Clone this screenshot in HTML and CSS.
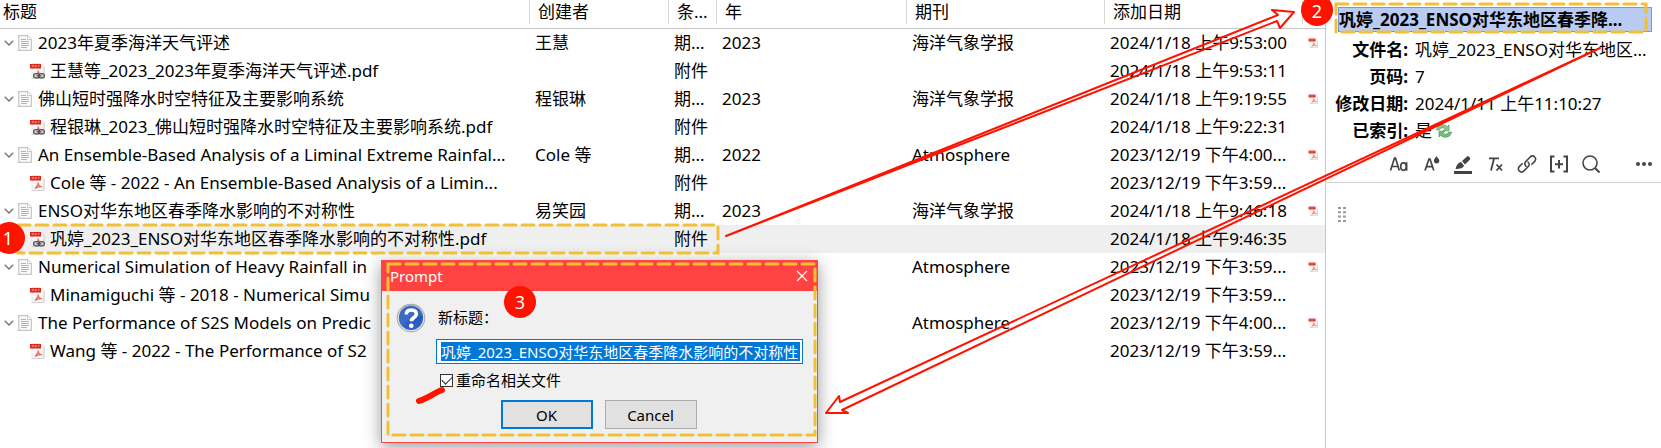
FILE: index.html
```
<!DOCTYPE html>
<html lang="zh-CN">
<head>
<meta charset="utf-8">
<title>Zotero</title>
<link rel="stylesheet" href="styles.css">
</head>
<body>
<svg class="defs" aria-hidden="true">
  <symbol id="doc" viewBox="0 0 14 16">
    <path d="M.7.7H9.6L13.3 4.4V15.3H.7Z" fill="#f9f9f9" stroke="#c6c6c6" stroke-width="1.2"/>
    <path d="M9.5.8V4.5H13.2" fill="#fff" stroke="#c9c9c9"/>
    <path d="M3 4.5H8M3 6.5H11M3 8.5H11M3 10.5H11M3 12.5H9" stroke="#b4b4b4"/>
  </symbol>
  <symbol id="pdf" viewBox="0 0 16 16">
    <path d="M3 .5H11.5L15 4V15.5H3Z" fill="#f7f7f7" stroke="#e6e6e6"/>
    <path d="M15 4V15.5H3" fill="none" stroke="#d2d2d2"/>
    <path d="M1 1H12V5.500H1Z" fill="#dd2113"/>
    <path d="M3 4V2.300H4.500V3.300H3M6 2.300V4H7L7.700 3.200 7 2.300ZM9.200 4V2.300H10.700M9.200 3.200H10.300" fill="none" stroke="#f6b5ae" stroke-width=".6"/>
    <path d="M6 13.500C8 12 9.300 9.500 9.200 7.500 9.300 10 11 11.700 13.200 11.800 10.500 11.200 8 12 6 13.500Z" fill="none" stroke="#ef6a5c" stroke-width="1.200"/>
  </symbol>
  <symbol id="pdflink" viewBox="0 0 16 16">
    <use href="#pdf" width="16" height="16"/>
    <rect x="4" y="10" width="12" height="5.500" rx="2.700" fill="#d6d6d6"/>
    <rect x="4.600" y="10.600" width="6" height="4.300" rx="2.100" fill="none" stroke="#555" stroke-width="1.300"/>
    <rect x="9.400" y="10.600" width="6" height="4.300" rx="2.100" fill="none" stroke="#555" stroke-width="1.300"/>
    <path d="M7.500 12.700H12.500" stroke="#555" stroke-width="1.200"/>
  </symbol>
  <symbol id="chev" viewBox="0 0 10 6">
    <path d="M.8.8 5 5 9.200.8" fill="none" stroke="#6f6f6f" stroke-width="1.300"/>
  </symbol>
</svg>

<div class="app">
  <main class="library">
    <table class="items">
      <colgroup><col><col class="c-creator"><col class="c-type"><col class="c-year"><col class="c-journal"><col class="c-date"><col class="c-att"></colgroup>
      <thead>
        <tr><th><div>标题</div></th><th><div>创建者</div></th><th><div>条...</div></th><th><div>年</div></th><th><div>期刊</div></th><th><div>添加日期</div></th><th><div></div></th></tr>
      </thead>
      <tbody>
        <tr><td><div class="name"><svg class="chev"><use href="#chev"/></svg><svg class="doc"><use href="#doc"/></svg><span>2023年夏季海洋天气评述</span></div></td><td>王慧</td><td>期...</td><td>2023</td><td>海洋气象学报</td><td>2024/1/18 上午9:53:00</td><td><svg class="att"><use href="#pdf"/></svg></td></tr>
        <tr><td><div class="name child"><svg class="pdf"><use href="#pdflink"/></svg><span>王慧等_2023_2023年夏季海洋天气评述.pdf</span></div></td><td></td><td>附件</td><td></td><td></td><td>2024/1/18 上午9:53:11</td><td></td></tr>
        <tr><td><div class="name"><svg class="chev"><use href="#chev"/></svg><svg class="doc"><use href="#doc"/></svg><span>佛山短时强降水时空特征及主要影响系统</span></div></td><td>程银琳</td><td>期...</td><td>2023</td><td>海洋气象学报</td><td>2024/1/18 上午9:19:55</td><td><svg class="att"><use href="#pdf"/></svg></td></tr>
        <tr><td><div class="name child"><svg class="pdf"><use href="#pdflink"/></svg><span>程银琳_2023_佛山短时强降水时空特征及主要影响系统.pdf</span></div></td><td></td><td>附件</td><td></td><td></td><td>2024/1/18 上午9:22:31</td><td></td></tr>
        <tr><td><div class="name"><svg class="chev"><use href="#chev"/></svg><svg class="doc"><use href="#doc"/></svg><span>An Ensemble-Based Analysis of a Liminal Extreme Rainfal...</span></div></td><td>Cole 等</td><td>期...</td><td>2022</td><td>Atmosphere</td><td>2023/12/19 下午4:00...</td><td><svg class="att"><use href="#pdf"/></svg></td></tr>
        <tr><td><div class="name child"><svg class="pdf"><use href="#pdf"/></svg><span>Cole 等 - 2022 - An Ensemble-Based Analysis of a Limin...</span></div></td><td></td><td>附件</td><td></td><td></td><td>2023/12/19 下午3:59...</td><td></td></tr>
        <tr><td><div class="name"><svg class="chev"><use href="#chev"/></svg><svg class="doc"><use href="#doc"/></svg><span>ENSO对华东地区春季降水影响的不对称性</span></div></td><td>易笑园</td><td>期...</td><td>2023</td><td>海洋气象学报</td><td>2024/1/18 上午9:46:18</td><td><svg class="att"><use href="#pdf"/></svg></td></tr>
        <tr class="selected"><td><div class="name child"><svg class="pdf"><use href="#pdflink"/></svg><span>巩婷_2023_ENSO对华东地区春季降水影响的不对称性.pdf</span></div></td><td></td><td>附件</td><td></td><td></td><td>2024/1/18 上午9:46:35</td><td></td></tr>
        <tr><td><div class="name"><svg class="chev"><use href="#chev"/></svg><svg class="doc"><use href="#doc"/></svg><span>Numerical Simulation of Heavy Rainfall in</span></div></td><td></td><td></td><td></td><td>Atmosphere</td><td>2023/12/19 下午3:59...</td><td><svg class="att"><use href="#pdf"/></svg></td></tr>
        <tr><td><div class="name child"><svg class="pdf"><use href="#pdf"/></svg><span>Minamiguchi 等 - 2018 - Numerical Simu</span></div></td><td></td><td></td><td></td><td></td><td>2023/12/19 下午3:59...</td><td></td></tr>
        <tr><td><div class="name"><svg class="chev"><use href="#chev"/></svg><svg class="doc"><use href="#doc"/></svg><span>The Performance of S2S Models on Predic</span></div></td><td></td><td></td><td></td><td>Atmosphere</td><td>2023/12/19 下午4:00...</td><td><svg class="att"><use href="#pdf"/></svg></td></tr>
        <tr><td><div class="name child"><svg class="pdf"><use href="#pdf"/></svg><span>Wang 等 - 2022 - The Performance of S2</span></div></td><td></td><td></td><td></td><td></td><td>2023/12/19 下午3:59...</td><td></td></tr>
      </tbody>
    </table>
  </main>

  <aside class="details">
    <input class="title-field" type="text" aria-label="标题" value="巩婷_2023_ENSO对华东地区春季降..." readonly>
    <dl class="meta">
      <dt>文件名:</dt><dd>巩婷_2023_ENSO对华东地区...</dd>
      <dt>页码:</dt><dd>7</dd>
      <dt>修改日期:</dt><dd>2024/1/11 上午11:10:27</dd>
      <dt>已索引:</dt><dd>是 <svg class="sync" viewBox="0 0 16 14"><path d="M.5 6C1 2.500 3.500.8 6.500.8 8.500.8 10 1.500 11.200 2.700L13 1V6.800H7.200L9.200 4.800C7.500 3.200 4 3.500 3.300 6Z" fill="#8ccb90" stroke="#4a9a56" stroke-width=".7"/><path d="M15.500 8C15 11.500 12.500 13.200 9.500 13.200 7.500 13.200 6 12.500 4.800 11.300L3 13V7.200H8.800L6.800 9.200C8.500 10.800 12 10.500 12.700 8Z" fill="#74bd78" stroke="#4a9a56" stroke-width=".7"/></svg></dd>
    </dl>
    <div class="toolbar">
      <button type="button" aria-label="格式"><svg viewBox="0 0 20 20"><g fill="none" stroke="#444" stroke-width="1.700"><path d="M1.500 16.500 5.500 4H6.500L10.300 16.500M3 12.500H9"/><ellipse cx="14.500" cy="12.600" rx="2.800" ry="3.700"/><path d="M17.600 8.200V16.700"/></g></svg></button>
      <button type="button" aria-label="颜色"><svg viewBox="0 0 20 20"><path d="M4 16.500 8 5H9L12.800 16.500M5.500 12.700H11.500" fill="none" stroke="#444" stroke-width="1.700"/><path d="M15.500 2C16.500 4 18.300 5 18.300 6.800A2.700 2.700 0 0 1 12.900 6.800C12.900 5 14.500 4 15.500 2Z" fill="#444"/></svg></button>
      <button type="button" aria-label="高亮"><svg viewBox="0 0 20 20"><path d="M1 17H19V20H1Z M2.500 15C3.500 11 5 8.500 8 8L11 11.500C10.500 14 7 15 2.500 15ZM9 7 14 2.500C15.500 1.500 18 4 17 5.500L12 10.500Z" fill="#444"/></svg></button>
      <button type="button" aria-label="清除格式"><svg viewBox="0 0 20 20"><path d="M4 4.300H14M9 4.500 6 16.500M11.500 10.500 17 16.500M17 10.500 11.500 16.500" fill="none" stroke="#444" stroke-width="1.800"/></svg></button>
      <button type="button" aria-label="链接"><svg viewBox="0 0 20 20"><g fill="none" stroke="#444" stroke-width="1.600" stroke-linecap="round"><path d="M9 12.200C7.300 10.500 7.500 8.800 9 7.300L13 3.200C14.500 1.800 16.500 1.800 17.700 3 19 4.200 18.900 6.200 17.500 7.600L14.800 10.300"/><path d="M11 8C12.700 9.500 12.500 11.300 11 12.800L7 16.800C5.500 18.200 3.500 18.200 2.300 17 1 15.800 1.100 13.800 2.500 12.400L5.200 9.700"/></g></svg></button>
      <button type="button" aria-label="引用"><svg viewBox="0 0 20 20"><path d="M5.500 2.500H2V17.500H5.500M14.500 2.500H18V17.500H14.500M10 6V14.500M6 10.200H14" fill="none" stroke="#444" stroke-width="2"/></svg></button>
      <button type="button" aria-label="搜索"><svg viewBox="0 0 20 20"><path d="M14 14 18.500 18.500" stroke="#444" stroke-width="2"/><circle cx="9" cy="9" r="7" fill="none" stroke="#444" stroke-width="1.600"/></svg></button>
      <button type="button" class="more" aria-label="更多"><svg viewBox="0 0 20 20"><g fill="#444"><circle cx="4" cy="10" r="2"/><circle cx="10" cy="10" r="2"/><circle cx="16" cy="10" r="2"/></g></svg></button>
    </div>
    <div class="note"><svg class="grip" viewBox="0 0 8 15"><path d="M0 1H3M5 1H8M0 5.300H3M5 5.300H8M0 9.600H3M5 9.600H8M0 14H3M5 14H8" stroke="#999" stroke-width="2"/></svg></div>
  </aside>
</div>

<form class="dialog" role="dialog" aria-label="Prompt">
  <header class="dialog-bar"><span>Prompt</span><button type="button" aria-label="关闭"><svg viewBox="0 0 12 12"><path d="M1 1 11 11M11 1 1 11" stroke="#fff" stroke-width="1.200"/></svg></button></header>
  <div class="dialog-body">
    <svg class="question" viewBox="0 0 30 30">
      <defs><linearGradient id="blue" x1="0" y1="0" x2="0" y2="1"><stop offset="0" stop-color="#1d4fae"/><stop offset="1" stop-color="#2d63cc"/></linearGradient></defs>
      <circle cx="15" cy="15" r="14.300" fill="#a9a9a9"/><circle cx="15" cy="15" r="13.300" fill="#dedede"/>
      <circle cx="15" cy="15" r="12" fill="url(#blue)"/>
      <path d="M3 15A12 12 0 0 1 27 13C20 12 10 17 7 24A12 12 0 0 1 3 15Z" fill="#4a76c8" opacity=".6"/>
      <path d="M10.300 11.500C10.300 8.500 12.300 7 15.200 7 18.500 7 20.300 8.800 20.300 11.200 20.300 14.500 15.400 14.500 15.400 18.300" fill="none" stroke="#fff" stroke-width="3.600"/>
      <circle cx="15.300" cy="22.800" r="2.300" fill="#fff"/>
    </svg>
    <div class="fields">
      <label for="new-title">新标题：</label>
      <input id="new-title" type="text" value="巩婷_2023_ENSO对华东地区春季降水影响的不对称性">
      <label class="check"><input type="checkbox" checked>重命名相关文件</label>
    </div>
  </div>
  <div class="actions"><button type="button" class="primary">OK</button><button type="button">Cancel</button></div>
</form>

<svg class="marks" width="1661" height="448" viewBox="0 0 1661 448">
  <g class="dashed">
    <path d="M18 225H718V253H18Z"/>
    <path d="M1336 4H1646V32H1336Z"/>
    <path d="M388 264H815V435H388Z"/>
  </g>
  <g class="arrow">
    <path d="M726 236 1278 15 1272 10 1294 12 1280 28 1277 21Z"/>
    <path d="M1600 48 840 402 839 396 826 413 848 413 842 410Z"/>
  </g>
  <path class="stroke" d="M419 401C428 398 434 393 442 390"/>
  <g class="badges">
    <circle cx="9" cy="238" r="16"/><circle cx="1317" cy="10" r="16"/><circle cx="520" cy="302" r="16"/>
  </g>
  <g class="numbers"><text x="8" y="245">1</text><text x="1317" y="18">2</text><text x="520" y="309">3</text></g>
</svg>
</body>
</html>
```
FILE: styles.css
```
* { box-sizing: border-box; }
body {
  margin: 0;
  background: #fff;
  color: #000;
  font: 17px/28px "Noto Sans", "Noto Sans CJK SC", sans-serif;
  overflow: hidden;
}
button, input { font: inherit; color: inherit; }
.defs { position: absolute; width: 0; height: 0; }

.app { display: flex; min-height: 100vh; }
.library { flex: 1; min-width: 0; border-right: 1px solid #c8c8c8; }

.items { width: 100%; table-layout: fixed; border-collapse: collapse; }
.c-creator { width: 139px; }
.c-type { width: 48px; }
.c-year { width: 190px; }
.c-journal { width: 198px; }
.c-date { width: 198px; }
.c-att { width: 23px; }
.items th {
  height: 28px;
  padding: 0;
  font-weight: 400;
  text-align: left;
  vertical-align: top;
  border-bottom: 1px solid #c4c4c4;
}
.items th div { height: 24px; line-height: 24px; padding-left: 8px; border-left: 1px solid #d8d8d8; }
.items th:first-child div { padding-left: 3px; border-left: 0; }
.items td { height: 28px; padding: 0 0 0 6px; white-space: nowrap; }
.items td:first-child, .items td:last-child { padding-left: 0; }
.selected { background: #efefef; }
.name { display: flex; align-items: center; padding-left: 4px; }
.name.child { padding-left: 29px; }
.chev { width: 10px; height: 6px; margin-right: 4px; }
.doc { width: 14px; height: 16px; margin-right: 6px; }
.pdf { width: 16px; height: 16px; margin-right: 5px; }
.att { display: block; width: 10px; height: 10px; margin-left: 6px; }

.details { width: 335px; display: flex; flex-direction: column; padding-top: 7px; }
.title-field {
  height: 25px;
  margin: 0 9px 4px 12px;
  padding: 0;
  border: 1px solid #7896dc;
  border-radius: 0;
  background: #b9cbf2;
  font-weight: 700;
  outline: 0;
}
.meta {
  display: grid;
  grid-template-columns: 82px 1fr;
  column-gap: 7px;
  margin: 0;
  line-height: 27px;
  white-space: nowrap;
}
.meta dt { font-weight: 700; display: flex; justify-content: flex-end; }
.meta dd { margin: 0; }
.sync { width: 16px; height: 14px; vertical-align: -1px; }
.toolbar { display: flex; height: 39px; padding: 1px 1px 0 57px; border-bottom: 1px solid #d4d4d4; }
.toolbar button {
  width: 32px;
  padding: 0;
  border: 0;
  background: none;
  display: flex;
  align-items: center;
  justify-content: center;
}
.toolbar svg { width: 20px; height: 20px; }
.toolbar .more { margin-left: auto; }
.note { padding: 24px 12px; }
.grip { display: block; width: 8px; height: 15px; }

.dialog {
  position: absolute;
  left: 381px;
  top: 260px;
  width: 437px;
  border: 1px solid #ff4343;
  background: #f0f0f0;
  font-size: 15px;
  line-height: 20px;
  box-shadow: 0 4px 16px rgba(0, 0, 0, .4);
}
.dialog-bar {
  display: flex;
  justify-content: space-between;
  align-items: center;
  height: 30px;
  padding: 0 9px 0 8px;
  background: #ff4343;
  color: #fff;
}
.dialog-bar button { display: flex; padding: 0; border: 0; background: none; }
.dialog-bar svg { width: 12px; height: 12px; }
.dialog-body { display: flex; gap: 10px; padding: 12px 14px 0 14px; }
.question { width: 30px; height: 30px; flex: none; }
.fields { flex: 1; min-width: 0; display: flex; flex-direction: column; }
.fields label { padding: 4px 2px 0; }
#new-title {
  height: 25px;
  margin: 12px 0 6px;
  padding: 2px 2px 2px 4px;
  border: 1px solid #0078d7;
  border-radius: 0;
  background: linear-gradient(#0078d7, #0078d7) content-box, #fff;
  color: #fff;
  outline: 0;
}
.fields .check { display: flex; align-items: center; gap: 3px; padding: 0 4px; }
.check input {
  appearance: none;
  width: 13px;
  height: 13px;
  margin: 0;
  border: 1px solid #333;
  background: #fff;
  display: grid;
  place-items: center;
}
.check input::before {
  content: "";
  width: 9px;
  height: 5px;
  margin-bottom: 3px;
  border: solid #222;
  border-width: 0 0 1px 1px;
  transform: rotate(-45deg);
}
.actions { display: flex; justify-content: center; gap: 12px; padding: 10px 2px 13px 0; }
.actions button { width: 92px; height: 29px; padding: 0; border: 1px solid #adadad; background: #e1e1e1; }
.actions .primary { border: 2px solid #0078d7; }

.marks { position: absolute; left: 0; top: 0; pointer-events: none; }
.dashed { fill: none; stroke: #f2c037; stroke-width: 3; stroke-dasharray: 12 6; stroke-linecap: round; }
.arrow { fill: none; stroke: #ff1200; stroke-width: 2; stroke-linejoin: round; }
.stroke { fill: none; stroke: #ff1200; stroke-width: 6; stroke-linecap: round; }
.badges { fill: #ff1200; }
.numbers { fill: #fff; font-size: 18px; text-anchor: middle; }
```
